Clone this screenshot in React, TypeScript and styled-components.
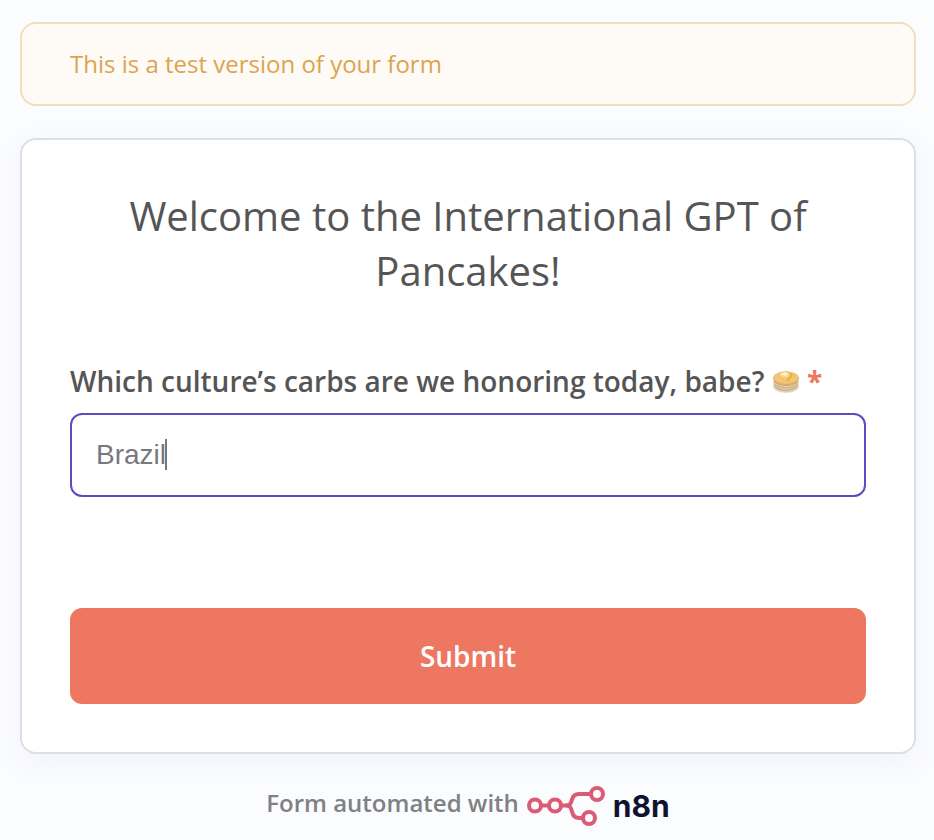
import React, { useState } from "react";
import styled, { createGlobalStyle } from "styled-components";

const GlobalStyle = createGlobalStyle`
  * { box-sizing: border-box; }
  body {
    margin: 0;
    background: #fbfcfe;
    font-family: "Open Sans", "Noto Sans", sans-serif;
    color: #555555;
  }
`;

const Page = styled.main`
  display: flex;
  flex-direction: column;
  padding: 22px 18px 12px 20px;
`;

const Notice = styled.section`
  margin-bottom: 32px;
  padding: 24px 48px;
  border: 2px solid #f2debb;
  border-radius: 16px;
  background: #fefaf6;
  color: #dca450;
  font-size: 24px;
  line-height: 32px;

  p { margin: 0; }
`;

const Card = styled.form`
  display: flex;
  flex-direction: column;
  margin-bottom: 31px;
  padding: 48px;
  border: 2px solid #dbdfe7;
  border-radius: 16px;
  background: #fff;
  box-shadow: 0 8px 32px rgba(99, 77, 255, 0.06);
`;

const Title = styled.h1`
  margin: 0 0 64px;
  font-size: 40px;
  font-weight: 400;
  line-height: 55px;
  text-align: center;
`;

const Field = styled.div`
  display: flex;
  flex-direction: column;
  gap: 12px;
  margin-bottom: 111px;
`;

const Label = styled.label`
  font-size: 28px;
  font-weight: 600;
  line-height: 39px;
`;

const Required = styled.span`
  color: #ee7762;
  font-weight: 700;
`;

const InputWrap = styled.div`
  position: relative;
  display: flex;
`;

const TextInput = styled.input`
  flex: 1;
  min-width: 0;
  height: 84px;
  padding: 0 24px;
  border: 2px solid #5a4cc2;
  border-radius: 12px;
  outline: none;
  background: #fff;
  color: #77787f;
  caret-color: transparent;
  font-family: "Liberation Sans", Arial, sans-serif;
  font-size: 28px;
`;

const Caret = styled.span`
  position: absolute;
  top: 26px;
  left: 95px;
  width: 2px;
  height: 31px;
  background: #77787f;
  pointer-events: none;
`;

const SubmitButton = styled.button`
  height: 96px;
  border: 0;
  border-radius: 12px;
  background: #ee7762;
  color: #fff;
  font-family: inherit;
  font-size: 28px;
  font-weight: 600;
  line-height: 40px;
  cursor: pointer;
`;

const Footer = styled.footer`
  display: flex;
  justify-content: center;
`;

const FooterLink = styled.a`
  display: flex;
  align-items: flex-start;
  gap: 8px;
  color: #7f8184;
  font-size: 24px;
  font-weight: 600;
  line-height: 36px;
  text-decoration: none;
`;

const Brand = styled.span`
  display: flex;
  align-items: center;
  gap: 6px;
  color: #101330;
  font-family: Inter, "Open Sans", sans-serif;
  font-size: 30px;
  font-weight: 700;
`;

const PancakeSvg = styled.svg`
  width: 28px;
  height: 28px;
  vertical-align: -4px;
`;

function Pancakes() {
  return (
    <PancakeSvg viewBox="0 0 28 28" role="img" aria-label="pancakes">
      <ellipse cx="14" cy="18.500" rx="13" ry="6.500" fill="#e2dfda" />
      <path d="M1.500 10v8.500c1 3.500 6 5.500 12.500 5.500s11.500-2 12.500-5.500V10z" fill="#e4d0a8" />
      <g fill="none" stroke="#b89a70" strokeWidth="0.8">
        <path d="M2 13c2 3 7 4.500 12 4.500S24 16 26 13" />
        <path d="M2 15.500c2 3 7 4.500 12 4.500s10-1.500 12-4.500" />
        <path d="M2.500 18c2 3 6.500 4.300 11.500 4.300s9.500-1.300 11.500-4.300" />
      </g>
      <ellipse cx="14" cy="10.200" rx="12.800" ry="6.800" fill="#dda75a" />
      <ellipse cx="14" cy="9.600" rx="12.400" ry="6.300" fill="#f2c477" />
      <path d="M17 5c3 0 5 2 3 4-2 1-2 2-3 4-1 1-2 1-2-1l1-3z" fill="#e9af4e" />
      <path d="M8 6l5-2 4 2 1 2-4 2-6-2z" fill="#f8dc84" />
      <path d="M8 6l5-2 4 2-4 2z" fill="#fff3bd" />
    </PancakeSvg>
  );
}

function BrandMark() {
  return (
    <svg width="80" height="42" viewBox="0 0 80 42" fill="none" stroke="#db5a76" strokeWidth="4" aria-hidden="true">
      <circle cx="8" cy="20.500" r="6" />
      <circle cx="28" cy="20.500" r="6" />
      <circle cx="70" cy="9" r="6" />
      <circle cx="62" cy="33" r="6" />
      <path d="M14 20.500h8M34 20.500h5c4 0 5-2 6-6 1-4 3-5.500 7-5.500h12" />
      <path d="M39 20.500c4 0 5 2 6 6 1 4.500 3 6.500 7 6.500h4" />
    </svg>
  );
}

export default function App() {
  const [culture, setCulture] = useState("Brazil");

  return (
    <>
      <GlobalStyle />
      <Page>
        <Notice>
          <p>This is a test version of your form</p>
        </Notice>
        <Card onSubmit={(event) => event.preventDefault()}>
          <Title>Welcome to the International GPT of Pancakes!</Title>
          <Field>
            <Label htmlFor="culture">
              Which culture’s carbs are we honoring today, babe? <Pancakes />{" "}
              <Required>*</Required>
            </Label>
            <InputWrap>
              <TextInput
                id="culture"
                type="text"
                required
                value={culture}
                onChange={(event) => setCulture(event.target.value)}
              />
              {culture === "Brazil" && <Caret />}
            </InputWrap>
          </Field>
          <SubmitButton type="submit">Submit</SubmitButton>
        </Card>
        <Footer>
          <FooterLink href="#n8n">
            Form automated with
            <Brand>
              <BrandMark />
              n8n
            </Brand>
          </FooterLink>
        </Footer>
      </Page>
    </>
  );
}
